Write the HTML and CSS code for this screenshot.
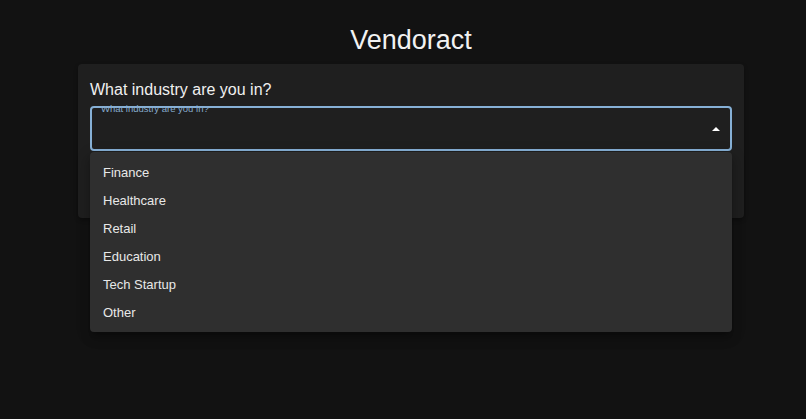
FILE: index.html
```html
<!DOCTYPE html>
<html lang="en">
<head>
    <meta charset="UTF-8">
    <title>Vendoract</title>
    <link rel="stylesheet" href="styles.css">
</head>
<body>
    <div class="page">
        <h1 class="brand">Vendoract</h1>

        <div class="card">
            <h2 class="question">What industry are you in?</h2>

            <div class="select-wrap">
                <div class="select-field">
                    <span class="select-label">What industry are you in?</span>
                    <span class="select-arrow"></span>
                </div>

                <ul class="select-menu">
                    <li class="menu-item">Finance</li>
                    <li class="menu-item">Healthcare</li>
                    <li class="menu-item">Retail</li>
                    <li class="menu-item">Education</li>
                    <li class="menu-item">Tech Startup</li>
                    <li class="menu-item">Other</li>
                </ul>
            </div>

            <div class="card-actions"></div>
        </div>
    </div>
</body>
</html>
```

FILE: styles.css
```css
body {
    font-family: 'Liberation Sans', Arial, sans-serif;
    background-color: #121212;
    color: #ffffff;
    margin: 0;
}
.page {
    min-height: 100vh;
    box-sizing: border-box;
    padding: 24px 0 0 16px;
}
.brand {
    font-size: 27px;
    line-height: 32px;
    font-weight: 400;
    color: #f2f2f2;
    text-align: center;
    margin: 0 0 8px;
}
.card {
    background-color: #1f1f1f;
    border-radius: 4px;
    width: 642px;
    margin: 0 auto;
    padding: 14px 12px 12px;
    box-shadow: 0 2px 4px rgba(0,0,0,0.3);
}
.question {
    font-size: 16px;
    line-height: 24px;
    font-weight: 400;
    color: #f0f0f0;
    margin: 0 0 4px;
}
.select-wrap {
    position: relative;
}
.select-field {
    height: 41px;
    border: 2px solid #86b0d6;
    border-radius: 4px;
    display: flex;
    align-items: center;
    justify-content: flex-end;
    padding-right: 10px;
    position: relative;
}
.select-label {
    position: absolute;
    left: 9px;
    top: -5px;
    font-size: 9.5px;
    line-height: 11px;
    color: #86abcc;
}
.select-arrow {
    width: 0;
    height: 0;
    border-left: 4px solid transparent;
    border-right: 4px solid transparent;
    border-bottom: 4px solid #ffffff;
}
.select-menu {
    position: absolute;
    left: 0;
    right: 0;
    top: calc(100% + 1px);
    margin: 0;
    padding: 7px 0 5px;
    list-style: none;
    background-color: #2f2f2f;
    border-radius: 4px;
    box-shadow: 0 5px 5px -3px rgba(0,0,0,0.2), 0 8px 10px 1px rgba(0,0,0,0.14), 0 3px 14px 2px rgba(0,0,0,0.12);
    z-index: 10;
}
.menu-item {
    height: 28px;
    line-height: 28px;
    padding: 0 13px;
    font-size: 13px;
    color: #e8e8e8;
}
.card-actions {
    height: 55px;
}
```
